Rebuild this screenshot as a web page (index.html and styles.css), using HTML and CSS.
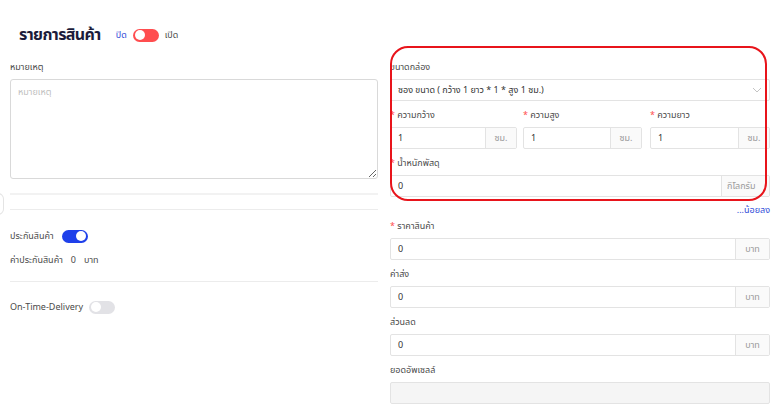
FILE: index.html
```html
<!DOCTYPE html>
<html lang="th">
<head>
  <meta charset="UTF-8">
  <meta name="viewport" content="width=device-width, initial-scale=1.0">
  <title>รายการสินค้า</title>
  <link rel="stylesheet" href="styles.css">
</head>
<body>
  <div class="page">
    <!-- Header -->
    <div class="header">
      <h1>รายการสินค้า</h1>
      <span class="switch-text off-text">ปิด</span>
      <span class="toggle toggle-red"><span class="knob"></span></span>
      <span class="switch-text">เปิด</span>
    </div>

    <div class="columns">
      <!-- Left column -->
      <div class="col-left">
        <span class="edge-tab"></span>
        <label class="field-label">หมายเหตุ</label>
        <textarea class="note" placeholder="หมายเหตุ"></textarea>
        <div class="line line-thick"></div>
        <div class="line line-second"></div>

        <div class="row row-insure">
          <span>ประกันสินค้า</span>
          <span class="toggle toggle-blue"><span class="knob"></span></span>
        </div>
        <div class="row row-fee">
          <span>ค่าประกันสินค้า</span>
          <span>0</span>
          <span>บาท</span>
        </div>
        <div class="line line-third"></div>
        <div class="row row-otd">
          <span>On-Time-Delivery</span>
          <span class="toggle toggle-gray"><span class="knob"></span></span>
        </div>
      </div>

      <!-- Right column -->
      <div class="col-right">
        <div class="highlight"></div>

        <div class="field">
          <label class="field-label">ขนาดกล่อง</label>
          <div class="select">
            <span>ซอง ขนาด ( กว้าง 1 ยาว * 1 * สูง 1 ซม.)</span>
            <svg width="10" height="6" viewBox="0 0 10 6"><path d="M1 1l4 4 4-4" fill="none" stroke="#c4c4c4" stroke-width="1"/></svg>
          </div>
        </div>

        <div class="field-row">
          <div class="field w1">
            <label class="field-label"><i>*</i> ความกว้าง</label>
            <div class="input-group"><span class="value">1</span><span class="addon">ซม.</span></div>
          </div>
          <div class="field w2">
            <label class="field-label"><i>*</i> ความสูง</label>
            <div class="input-group"><span class="value">1</span><span class="addon">ซม.</span></div>
          </div>
          <div class="field w3">
            <label class="field-label"><i>*</i> ความยาว</label>
            <div class="input-group"><span class="value">1</span><span class="addon">ซม.</span></div>
          </div>
        </div>

        <div class="field">
          <label class="field-label"><i>*</i> น้ำหนักพัสดุ</label>
          <div class="input-group"><span class="value">0</span><span class="addon addon-kg">กิโลกรัม</span></div>
        </div>

        <div class="less-link"><a href="#">...น้อยลง</a></div>

        <div class="field">
          <label class="field-label"><i>*</i> ราคาสินค้า</label>
          <div class="input-group"><span class="value">0</span><span class="addon addon-baht">บาท</span></div>
        </div>
        <div class="field">
          <label class="field-label">ค่าส่ง</label>
          <div class="input-group"><span class="value">0</span><span class="addon addon-baht">บาท</span></div>
        </div>
        <div class="field">
          <label class="field-label">ส่วนลด</label>
          <div class="input-group"><span class="value">0</span><span class="addon addon-baht">บาท</span></div>
        </div>
        <div class="field">
          <label class="field-label">ยอดอัพเซลล์</label>
          <div class="input-group disabled"></div>
        </div>
      </div>
    </div>
  </div>
</body>
</html>
```

FILE: styles.css
```css
/* Reset */
* {
  margin: 0;
  padding: 0;
  box-sizing: border-box;
}

body {
  font-family: "Noto Sans Thai", "Noto Sans", sans-serif;
  background-color: #fff;
  color: #4a4a4a;
  font-size: 9px;
  overflow: hidden;
}

.page {
  padding: 22px 10px 0;
}

/* Header */
.header {
  display: flex;
  align-items: center;
  height: 26px;
  padding-left: 9px;
  margin-bottom: 11px;
}

.header h1 {
  font-size: 16px;
  font-weight: 700;
  letter-spacing: -0.6px;
  color: #1b1b3a;
  margin-right: 15px;
}

.switch-text {
  font-size: 9px;
  color: #4a4a4a;
}

.off-text {
  color: #2f4bd8;
}

/* Toggles */
.toggle {
  display: inline-flex;
  align-items: center;
  width: 26px;
  height: 13px;
  border-radius: 7px;
  padding: 0 2px;
  margin: 0 6px;
}

.toggle .knob {
  width: 10px;
  height: 10px;
  border-radius: 50%;
  background-color: #fff;
}

.toggle-red {
  background-color: #ff4d4f;
}

.toggle-blue {
  background-color: #1f40ea;
  justify-content: flex-end;
}

.toggle-gray {
  background-color: #e2e2e6;
}

/* Columns */
.columns {
  display: grid;
  grid-template-columns: 368px 380px;
  column-gap: 12px;
}

.col-left,
.col-right {
  position: relative;
}

.field-label {
  display: block;
  height: 16px;
  line-height: 16px;
  margin-bottom: 4px;
  color: #4a4a4a;
  white-space: nowrap;
}

.field-label i {
  font-style: normal;
  color: #ff4d4f;
}

/* Left column */
.edge-tab {
  position: absolute;
  left: -14px;
  top: 134px;
  width: 8px;
  height: 22px;
  border: 1px solid #e4e4e4;
  border-left: none;
  border-radius: 0 6px 6px 0;
}

.note {
  display: block;
  width: 100%;
  height: 100px;
  border: 1px solid #d9d9d9;
  border-radius: 3px;
  padding: 5px 7px;
  font-family: inherit;
  font-size: 9px;
  resize: vertical;
}

.note::placeholder {
  color: #bfbfbf;
}

.line {
  background-color: #ececec;
  height: 1px;
}

.line-thick {
  margin-top: 14px;
  height: 2px;
  background-color: #f2f2f2;
}

.line-second {
  margin-top: 14px;
}

.line-third {
  margin-top: 13px;
}

.row {
  display: flex;
  align-items: center;
  height: 16px;
  gap: 6px;
}

.row .toggle {
  margin: 0 0 0 2px;
}

.row-insure {
  margin-top: 18px;
}

.row-fee {
  margin-top: 8px;
  gap: 8px;
}

.row-otd {
  margin-top: 17px;
}

.row-otd .toggle {
  margin-left: 0;
}

/* Right column */
.highlight {
  position: absolute;
  left: 0;
  top: -13px;
  width: 377px;
  height: 155px;
  border: 2px solid #e8141b;
  border-radius: 18px;
  pointer-events: none;
}

.field {
  margin-bottom: 6px;
}

.field-row {
  display: flex;
  gap: 6px;
}

.w1 { width: 127px; }
.w2 { width: 119px; }
.w3 { width: 120px; margin-left: 2px; }

.select,
.input-group {
  display: flex;
  align-items: center;
  height: 22px;
  border: 1px solid #e3e3e3;
  border-radius: 2px;
  color: #333;
  font-size: 9px;
  overflow: hidden;
  white-space: nowrap;
}

.select {
  justify-content: space-between;
  padding: 0 7px;
}

.input-group .value {
  flex: 1;
  padding: 0 7px;
}

.addon {
  height: 100%;
  display: flex;
  align-items: center;
  justify-content: center;
  width: 31px;
  background-color: #fafafa;
  border-left: 1px solid #e3e3e3;
  color: #999;
}

.addon-kg {
  width: 48px;
  justify-content: flex-start;
  padding-left: 5px;
}

.addon-baht {
  width: 34px;
}

.input-group.disabled {
  background-color: #f5f5f5;
}

.less-link {
  height: 15px;
  line-height: 15px;
  text-align: right;
}

.less-link a {
  color: #2f4bd8;
  text-decoration: none;
}
```
